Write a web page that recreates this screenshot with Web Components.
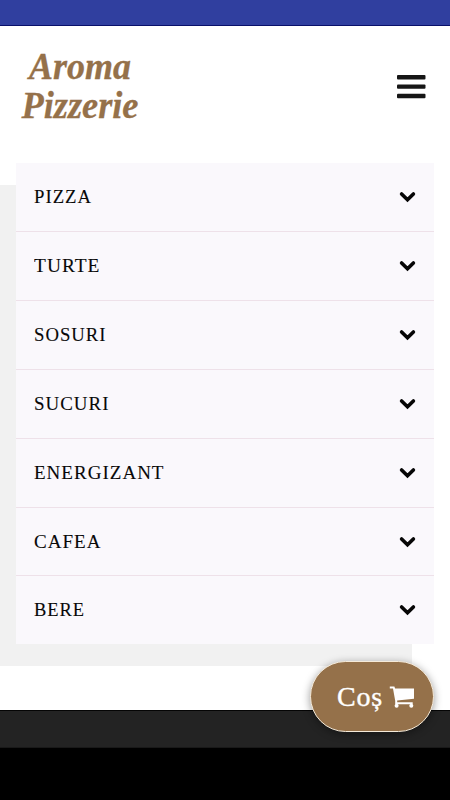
<!DOCTYPE html>
<html lang="ro">
<head>
<meta charset="utf-8">
<meta name="viewport" content="width=device-width, initial-scale=1">
<title>Aroma Pizzerie</title>
<style>
  body {
    margin: 0;
    background: #fff;
    font-family: "Liberation Serif", serif;
    overflow: hidden;
  }
</style>
</head>
<body>
<pizza-page>
  <site-header slot="header"></site-header>
  <menu-list>
    <menu-row width="58">PIZZA</menu-row>
    <menu-row width="66.5">TURTE</menu-row>
    <menu-row width="72.5">SOSURI</menu-row>
    <menu-row width="75.5">SUCURI</menu-row>
    <menu-row width="130.5">ENERGIZANT</menu-row>
    <menu-row width="67.5">CAFEA</menu-row>
    <menu-row width="51">BERE</menu-row>
  </menu-list>
  <cart-button slot="cart">Coș</cart-button>
</pizza-page>

<script>
class PizzaPage extends HTMLElement {
  constructor() {
    super();
    this.attachShadow({ mode: "open" });
  }

  static get styles() {
    return /* css */`
      :host {
        display: flex;
        flex-direction: column;
        height: 800px;
        position: relative;
      }

      .status {
        box-sizing: border-box;
        height: 26px;
        background: #303f9f;
        border-bottom: 1px solid #09106a;
      }

      main {
        display: grid;
        height: 547px;
        align-items: start;
      }

      .backdrop, slot { grid-area: 1 / 1; }

      .backdrop {
        width: 412px;
        height: 481px;
        margin-top: 22px;
        background: #f1f1f1;
      }

      footer {
        box-sizing: border-box;
        height: 38px;
        background: #232323;
        border-top: 1px solid #050505;
        border-bottom: 1px solid #191919;
      }

      .nav { flex: 1; background: #000; }

      /* floats over the list and the footer */
      .float {
        position: absolute;
        right: 16px;
        bottom: 68px;
      }
    `;
  }

  connectedCallback() {
    this.shadowRoot.innerHTML = /* html */`
    <style>${PizzaPage.styles}</style>
    <div class="status"></div>
    <slot name="header"></slot>
    <main>
      <div class="backdrop"></div>
      <slot></slot>
    </main>
    <footer></footer>
    <div class="nav"></div>
    <div class="float"><slot name="cart"></slot></div>`;
  }
}

class SiteHeader extends HTMLElement {
  constructor() {
    super();
    this.attachShadow({ mode: "open" });
  }

  static get styles() {
    return /* css */`
      :host {
        display: flex;
        justify-content: space-between;
        align-items: flex-start;
        box-sizing: border-box;
        height: 137px;
        padding: 19px 24px 0 16px;
      }

      svg { display: block; }

      .logo {
        fill: #95714a;
        stroke: #95714a;
        stroke-width: .3px;
        font: italic bold 38px "Liberation Serif", serif;
      }

      .burger { margin-top: 29px; fill: #161616; }
    `;
  }

  connectedCallback() {
    this.shadowRoot.innerHTML = /* html */`
    <style>${SiteHeader.styles}</style>
    <svg class="logo" width="130" height="85">
      <text x="13" y="34" textLength="102" lengthAdjust="spacingAndGlyphs">Aroma</text>
      <text x="5.5" y="73" textLength="117" lengthAdjust="spacingAndGlyphs">Pizzerie</text>
    </svg>
    <svg class="burger" width="29" height="26">
      <rect x="0" y="1" width="28.5" height="4.4" rx="1"/>
      <rect x="0" y="10.4" width="28.5" height="4.4" rx="1"/>
      <rect x="0" y="19.8" width="28.5" height="4.4" rx="1"/>
    </svg>`;
  }
}

class MenuList extends HTMLElement {
  constructor() {
    super();
    this.attachShadow({ mode: "open" });
  }

  connectedCallback() {
    this.shadowRoot.innerHTML = /* html */`
    <style>
      :host {
        display: flex;
        flex-direction: column;
        box-sizing: border-box;
        height: 481px;
        padding-top: .4px;
        margin: 0 16px;
        background: #faf8fc;
        grid-area: 1 / 1;
        overflow: hidden;
      }
    </style>
    <slot></slot>`;
  }
}

class MenuRow extends HTMLElement {
  constructor() {
    super();
    this.attachShadow({ mode: "open" });
  }

  static get styles() {
    return /* css */`
      :host {
        display: flex;
        flex: 0 0 68.85px;
        align-items: center;
        justify-content: space-between;
        box-sizing: border-box;
        padding: 0 18px;
        border-bottom: 1px solid #eee1e9;
      }

      :host(:last-child) { border-bottom-color: transparent; }

      svg { display: block; }

      .label {
        font-size: 19px;
        fill: #080808;
        stroke: #080808;
        stroke-width: .1px;
      }

      .chevron {
        fill: none;
        stroke: #060606;
        stroke-width: 3.6;
        stroke-linecap: round;
      }
    `;
  }

  connectedCallback() {
    const width = this.getAttribute("width");
    this.shadowRoot.innerHTML = /* html */`
    <style>${MenuRow.styles}</style>
    <svg class="label" width="160" height="26">
      <text x="0" y="18.7" textLength="${width}" lengthAdjust="spacingAndGlyphs" letter-spacing="1">${this.textContent}</text>
    </svg>
    <svg class="chevron" width="17" height="12">
      <path d="M2.6 2.9 8.5 8.8l5.9-5.9"/>
    </svg>`;
  }
}

class CartButton extends HTMLElement {
  constructor() {
    super();
    this.attachShadow({ mode: "open" });
  }

  static get styles() {
    return /* css */`
      :host {
        display: flex;
        align-items: center;
        box-sizing: border-box;
        width: 124px;
        height: 71px;
        padding: 0 18px 0 26px;
        gap: 6px;
        border: 1.5px solid #f5ead9;
        border-radius: 36px;
        background: #95714a;
        color: #fff;
        font-size: 28px;
        box-shadow: 0 2px 9px #0006;
      }

      .label {
        width: 47px;
        letter-spacing: .8px;
        -webkit-text-stroke: .4px #fff;
      }

      svg { display: block; flex: none; fill: #fff; margin-top: 1px; }
    `;
  }

  connectedCallback() {
    this.shadowRoot.innerHTML = /* html */`
    <style>${CartButton.styles}</style>
    <span class="label"><slot></slot></span>
    <svg width="26" height="23" viewBox="0 0 26 23">
      <path d="M.8.5h4.6l.7 2H25v10.300L8.200 14.500v1.700h15.500v2.100H6.200v-3.500L4 2.500H.8z"/>
      <circle cx="7.6" cy="19.800" r="2"/>
      <circle cx="22.300" cy="19.800" r="2"/>
    </svg>`;
  }
}

customElements.define("pizza-page", PizzaPage);
customElements.define("site-header", SiteHeader);
customElements.define("menu-list", MenuList);
customElements.define("menu-row", MenuRow);
customElements.define("cart-button", CartButton);
</script>
</body>
</html>
